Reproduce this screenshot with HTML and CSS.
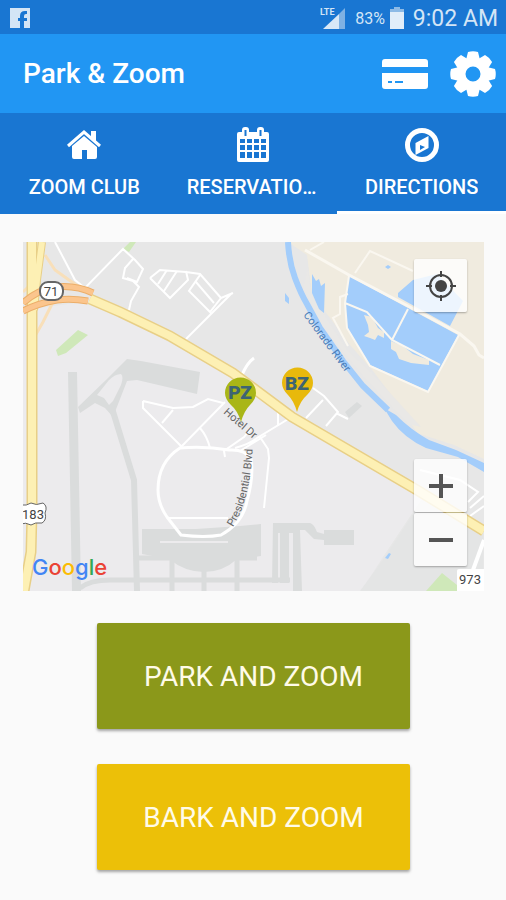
FILE: index.html
```html
<!DOCTYPE html>
<html lang="en">

<head>
    <meta charset="UTF-8" />
    <meta name="viewport" content="width=device-width, initial-scale=1.0" />
    <title>Park &amp; Zoom</title>
    <link rel="stylesheet" href="styles.css">
</head>

<body>
    <div class="status-bar">
        <svg class="fb-icon" width="20" height="20" viewBox="0 0 20 20" aria-hidden="true">
            <path fill="#d3e5f6" fill-rule="evenodd" d="M0 0h20v20h-6v-7h3v-3h-3V8q0-2 2-2h1V3h-2q-5 0-5 5v2H8v3h2v7H0z" />
        </svg>
        <div class="status-info">
            <svg width="26" height="24" viewBox="0 0 26 24" aria-hidden="true">
                <path fill="#7fb1e3" d="M25 2v21h-6V8z" />
                <path fill="#d9e8f7" d="M19 8v15H3z" />
                <text class="lte" x="0" y="9">LTE</text>
            </svg>
            <span class="battery-level">83%</span>
            <svg width="14" height="22" viewBox="0 0 14 22" aria-hidden="true">
                <path fill="#8dbae6" d="M4 0h6v2h4v4H0V2h4z" />
                <path fill="#e1edf9" d="M0 5h14v17H0z" />
            </svg>
            <span class="clock">9:02 AM</span>
        </div>
    </div>

    <header>
        <h1>Park &amp; Zoom</h1>
        <button class="icon-btn" aria-label="Payment">
            <svg width="46" height="32" viewBox="0 0 46 32">
                <path fill="#fff" fill-rule="evenodd" d="M3 1h40q3 0 3 3v5H0V4q0-3 3-3zM0 15h46v13q0 3-3 3H3q-3 0-3-3zM6 23v2h4v-2zM13 23v2h8v-2z" />
            </svg>
        </button>
        <button class="icon-btn" aria-label="Settings">
            <svg width="46" height="46" viewBox="-23 -23 46 46">
                <g fill="#fff">
                    <path id="tooth" d="M-7-14l2-8q5-1.500 10 0l2 8z" />
                    <use href="#tooth" transform="rotate(45)" />
                    <use href="#tooth" transform="rotate(90)" />
                    <use href="#tooth" transform="rotate(135)" />
                    <use href="#tooth" transform="rotate(180)" />
                    <use href="#tooth" transform="rotate(225)" />
                    <use href="#tooth" transform="rotate(270)" />
                    <use href="#tooth" transform="rotate(315)" />
                </g>
                <circle r="12" fill="none" stroke="#fff" stroke-width="9" />
            </svg>
        </button>
    </header>

    <nav class="tabs">
        <a href="#club" class="tab">
            <svg width="36" height="36" viewBox="0 0 36 36" aria-hidden="true">
                <path fill="#fff" d="M18 9l13 11v10q0 2-2 2h-8v-9h-5v9H8q-2 0-2-2V19z" />
                <path fill="none" stroke="#fff" stroke-width="3" d="M2 19L18 5l16 14" />
                <path fill="#fff" d="M25 4h5v12l-5-4z" />
            </svg>
            <span>ZOOM CLUB</span>
        </a>
        <a href="#reservations" class="tab">
            <svg width="36" height="36" viewBox="0 0 36 36" aria-hidden="true">
                <path fill="#fff" fill-rule="evenodd" d="M4 5h28q2 0 2 2v26q0 2-2 2H4q-2 0-2-2V7q0-2 2-2zM5 12v4h5v-4zM12 12v4h5v-4zM19 12v4h5v-4zM26 12v4h5v-4zM5 18v5h5v-5zM12 18v5h5v-5zM19 18v5h5v-5zM26 18v5h5v-5zM5 25v6h5v-6zM12 25v6h5v-6zM19 25v6h5v-6zM26 25v6h5v-6z" />
                <rect x="7" y="0" width="7" height="10" rx="3" fill="#fff" />
                <rect x="22" y="0" width="7" height="10" rx="3" fill="#fff" />
                <path stroke="#1976d2" stroke-width="2" d="M10.500 3v6M25.500 3v6" />
            </svg>
            <span>RESERVATIONS</span>
        </a>
        <a href="#directions" class="tab active" aria-current="page">
            <svg width="36" height="36" viewBox="0 0 36 36" aria-hidden="true">
                <circle cx="18" cy="18" r="14.500" fill="none" stroke="#fff" stroke-width="5" />
                <path fill="#fff" fill-rule="evenodd" d="M24.500 9v12l-13 7V16zM16 18v5l5-3z" />
            </svg>
            <span>DIRECTIONS</span>
        </a>
    </nav>

    <main>
        <div class="map">
            <svg class="map-canvas" viewBox="23 242 461 349" preserveAspectRatio="xMidYMid slice" role="img" aria-label="Map of the parking lots">
                <rect x="23" y="242" width="461" height="349" fill="#e7e7e7" />
                <!-- airport grounds -->
                <path fill="#ecebed" d="M23 310l60-8 50 20 100 56 60 44 110 65 20 10-40 60-28 44H23z" />
                <path fill="#e4e5e5" d="M383 560l38-58 62 32v57H360z" />
                <path fill="#f0ebdf" d="M288 242h196v217l-30-14-37-12-14-22-30-40-23-26-20-27-18-23-5-40z" />
                <path fill="#e9e8e6" d="M308 268q2 30 15 45l25 38 23 21 50 55-13-3-45-48-40-48-20-40z" />

                <!-- runways and aprons -->
                <g fill="#dadcdc">
                    <path d="M68 372h9l4 219H72z" />
                    <path fill-rule="evenodd" d="M78 407l28-27 21-21 14 2 59 11-3 22-60-14-10 1-14 36-8-9-10-5-15 10zM97 395l7 3 5 7 4-4 8-16q3-8 0-11-6 0-12 6z" />
                    <path d="M142 529h54l44-3 21-2v32l-24 3q-14 13-33 13t-35-13l-27-5z" />
                    <path d="M273 523h37q4 1 7 9l7 2v-4h30v15h-30v-5l-10-1-9-9h-5l2 61h-9v-58h-4v50h-9v-50h-2v50h-6z" />
                    <path d="M345 412l12-10 5 4-13 12z" />
                </g>
                <g fill="none" stroke="#dadcdc" stroke-width="6">
                    <path d="M111 405l23 75 3 111" />
                    <path d="M80 588q10-8 30-8h180M137 558h120M172 558v33M204 565v26M237 555v36" stroke-width="5" />
                </g>
                <path stroke="#ecebed" stroke-width="2" d="M160 542h68" />

                <!-- parks -->
                <path fill="#cfe8b9" d="M56 350l22-20 10 5-22 18-8 3zM123 249l7-7h6l-7 10zM426 591l16-18 15 12v6z" />

                <!-- water -->
                <path fill="#a3cdfb" d="M312 274l4 7 3-2 2 7 4-3-1 30-5-4-7-16zM285 293l4 5v6l-4-3zM349 276l109 59-30 56-58-26-23-37-2-27zM398 293l15-13 24-6 26 27-13 25-52-29zM385 267l3-2 3 2-3 2zM385 558l4-5 2 1-3 5z" />
                <path fill="none" stroke="#a3cdfb" stroke-width="6" d="M288 242q1 20 7 36t12 26l13 24 23 33 20 25 25 24" />
                <path fill="#a3cdfb" d="M384 408l12 7q15 15 33 25l27 10 28 13v9l-26-15-32-9q-22-10-34-27z" />
                <path fill="#f0ebdf" d="M364 315l8 2 6 11 6 4v6l-6-3-3 5-5-2-6-2 5-4-1-7zM391 341l12 5 10 8 16 6v5l-18-2-12-4-3-7-5-3z" />

                <!-- local roads -->
                <g fill="none" stroke="#fff" stroke-width="2">
                    <path d="M55 242l20 38 10 8 38-39 12 11 8 9-6 13-10-4M133 259l-8 9-2 10 10 3 6 6-8 14-2 9" />
                    <path d="M150 278l10-8 26 2 14 2 21 24 12-5M150 278l20 20 18-18-2-9M158 284l9-14M164 291l13-20M200 275l-11 16 21 21 11-14M196 282l18 21M232 293l-46 46" />
                    <path d="M143 401l30 7 20-1 15-8 15 4M143 401v7l39 39M162 423l11-13M225 402l-45 46M200 428q7 8 10 20" />
                    <path d="M242 375q5-12 12-17" stroke-width="3" />
                    <path d="M225 457l-1-6 20-14 8-10M235 448q15-4 22-10l33-20M240 451l26-16M260 437l8 12 1 9-5 50M278 426v-14l10 6" />
                    <path d="M313 388l11 8 14 16-12 14M323 400l-17 18M336 413l12 6M420 470l40 10 18 12-10 10M470 508l14-12M470 516l14-10" />
                    <path d="M168 518h60" />
                </g>
                <path fill="none" stroke="#fff" stroke-width="3" d="M180 448q-22 14-22 42 0 14 9 27l14 18q24 3 40 0 22-12 26-34 7-25 4-42-6-10-22-9-24-4-49-2z" />
                <path fill="none" stroke="#fff" stroke-width="4" d="M484 540l-11 30" />
                <g fill="none" stroke="#faf7f0" stroke-width="2">
                    <path d="M305 250l44 25 59 31 52 28 14 12 5 9 5 3" stroke-width="3" />
                    <path d="M355 273l15-22 43 20M345 303l22 9 25 28 48 25M408 309l-16 31M349 276l-4 27 2 25 23 38 58 26 31-57M348 294l-8 3v17l-7 4 15 28M310 250l14-8" />
                </g>

                <!-- highways -->
                <g fill="none" stroke="#f8dfb9" stroke-width="3">
                    <path d="M45 255l10 15 14 10 12 8M53 302l-10 20-8 14M23 292l8-8" />
                </g>
                <g fill="none" stroke="#e8cf87" stroke-width="11">
                    <path d="M32 242v270l-1 40-7 39" />
                    <path d="M42 242l-5 38-3 30" stroke-width="8" />
                    <path d="M90 299l30 13 50 24 63 37 59 44 125 73 67 41" />
                </g>
                <g fill="none" stroke="#fdf0b4" stroke-width="8">
                    <path d="M32 242v270l-1 40-7 39" />
                    <path d="M42 242l-5 38-3 30" stroke-width="6" />
                    <path d="M90 299l30 13 50 24 63 37 59 44 125 73 67 41" />
                </g>
                <g fill="none" stroke="#ecae69" stroke-width="7">
                    <path d="M23 303q14-13 33-16 20-2 37 6M23 311q16-8 34-11 14-2 31 1" />
                    <path stroke="#fbc58d" stroke-width="5" d="M23 303q14-13 33-16 20-2 37 6M23 311q16-8 34-11 14-2 31 1" />
                </g>

                <!-- road shields -->
                <rect x="40" y="282" width="23" height="18" rx="8" fill="#fff" stroke="#666" stroke-width="2" />
                <text class="shield" x="51" y="296">71</text>
                <path fill="#fff" stroke="#666" stroke-width="1" d="M20 505q7 1 11-2 5 3 12 0 5 3 2 10 2 7-3 10-7-1-11 2-5-3-11-1z" />
                <text class="shield" x="33" y="519">183</text>
                <rect x="457" y="569" width="30" height="24" rx="2" fill="#fff" />
                <text class="shield" x="470" y="584">973</text>

                <!-- street names -->
                <path id="riverPath" fill="none" d="M303 315l50 68" />
                <path id="hotelPath" fill="none" d="M223 413l44 38" />
                <path id="blvdPath" fill="none" d="M233 527q20-32 20-95" />
                <text class="river-name"><textPath href="#riverPath">Colorado River</textPath></text>
                <text class="street-name"><textPath href="#hotelPath">Hotel Dr</textPath></text>
                <text class="street-name"><textPath href="#blvdPath">Presidential Blvd</textPath></text>

                <!-- lot pins -->
                <path fill="#a9b617" d="M241 422q-3-11-10-17-6-6-6-12a15.500 15.500 0 0 1 31 0q0 6-6 12-6 6-9 17z" />
                <text class="pin-name" x="240" y="399">PZ</text>
                <path fill="#e8b90c" d="M297 412q-3-11-9-17-6-6-6-12a15.500 15.500 0 0 1 31 0q0 6-6 12-7 6-10 17z" />
                <text class="pin-name" x="297" y="390">BZ</text>

                <text class="map-logo" x="32" y="575"><tspan fill="#4285f4">G</tspan><tspan fill="#ea4335">o</tspan><tspan fill="#fbbc05">o</tspan><tspan fill="#4285f4">g</tspan><tspan fill="#34a853">l</tspan><tspan fill="#ea4335">e</tspan></text>
            </svg>

            <div class="map-controls">
                <button class="map-btn" aria-label="My location">
                    <svg width="30" height="30" viewBox="0 0 30 30">
                        <g fill="none" stroke="#444" stroke-width="2">
                            <circle cx="15" cy="15" r="11" />
                            <path d="M15 0v6M15 24v6M0 15h6M24 15h6" />
                        </g>
                        <circle cx="15" cy="15" r="6" fill="#444" />
                    </svg>
                </button>
                <div class="zoom-group">
                    <button class="map-btn" aria-label="Zoom in">
                        <svg width="24" height="24" viewBox="0 0 24 24"><path stroke="#555" stroke-width="4" d="M0 12h24M12 0v24" /></svg>
                    </button>
                    <button class="map-btn" aria-label="Zoom out">
                        <svg width="24" height="24" viewBox="0 0 24 24"><path stroke="#555" stroke-width="4" d="M0 12h24" /></svg>
                    </button>
                </div>
            </div>
        </div>

        <button class="lot-btn park">PARK AND ZOOM</button>
        <button class="lot-btn bark">BARK AND ZOOM</button>
    </main>
</body>

</html>
```
FILE: styles.css
```css
* {
    box-sizing: border-box;
}

body {
    font-family: Roboto, sans-serif;
    margin: 0;
    background: #fafafa;
}

svg {
    display: block;
    flex-shrink: 0;
}

button {
    font-family: inherit;
    border: none;
    padding: 0;
    cursor: pointer;
}

.status-bar {
    display: flex;
    align-items: center;
    justify-content: space-between;
    height: 34px;
    padding: 2px 8px 0 10px;
    background: #1976d2;
    color: #d3e5f6;
}

.status-info {
    display: flex;
    align-items: center;
}

.lte {
    font-size: 9px;
    font-weight: bold;
    fill: #d3e5f6;
}

.battery-level {
    margin: 0 5px 0 9px;
    font-size: 16px;
}

.clock {
    margin-left: 9px;
    font-size: 23px;
}

header {
    display: flex;
    align-items: center;
    gap: 22px;
    height: 79px;
    padding: 0 10px 0 23px;
    background: #2196f3;
    color: white;
}

header h1 {
    flex: 1;
    margin: 0;
    font-size: 28px;
    font-weight: 500;
}

.icon-btn {
    background: none;
}

.tabs {
    display: flex;
    height: 101px;
    background: #1976d2;
}

.tab {
    flex: 1;
    min-width: 0;
    display: flex;
    flex-direction: column;
    align-items: center;
    gap: 12px;
    padding: 14px 18px 0;
    border-bottom: 3px solid #1976d2;
    color: white;
    font-size: 20px;
    font-weight: 500;
    line-height: 24px;
    text-decoration: none;
}

.tab.active {
    border-bottom-color: white;
}

.tab span {
    max-width: 100%;
    overflow: hidden;
    white-space: nowrap;
    text-overflow: ellipsis;
}

main {
    display: flex;
    flex-direction: column;
    align-items: center;
    padding: 28px 22px 30px 23px;
}

.map {
    position: relative;
    width: 100%;
    margin-bottom: 32px;
}

.map-canvas {
    width: 100%;
    height: auto;
}

.map-controls {
    position: absolute;
    top: 17px;
    right: 17px;
    bottom: 25px;
    display: flex;
    flex-direction: column;
    justify-content: space-between;
}

.map-btn {
    display: flex;
    align-items: center;
    justify-content: center;
    width: 53px;
    height: 53px;
    border-radius: 2px;
    background: rgba(255, 255, 255, 0.8);
    box-shadow: 0 1px 2px rgba(0, 0, 0, 0.3);
}

.zoom-group {
    display: flex;
    flex-direction: column;
    gap: 1px;
}

.shield {
    font-size: 13px;
    text-anchor: middle;
    fill: #444;
}

.street-name {
    font-size: 11px;
    fill: #666;
}

.river-name {
    font-size: 11px;
    fill: #4a7db8;
}

.pin-name {
    font-size: 19px;
    font-weight: 900;
    text-anchor: middle;
    fill: #3d6473;
}

.map-logo {
    font-family: Inter, sans-serif;
    font-size: 22px;
    font-weight: 500;
}

.lot-btn {
    width: 68%;
    height: 106px;
    margin-bottom: 35px;
    border-radius: 2px;
    box-shadow: 0 2px 3px rgba(0, 0, 0, 0.35);
    color: #fffbe8;
    font-size: 28px;
}

.park {
    background: #8b981a;
}

.bark {
    background: #ecc008;
    margin-bottom: 0;
}
```
